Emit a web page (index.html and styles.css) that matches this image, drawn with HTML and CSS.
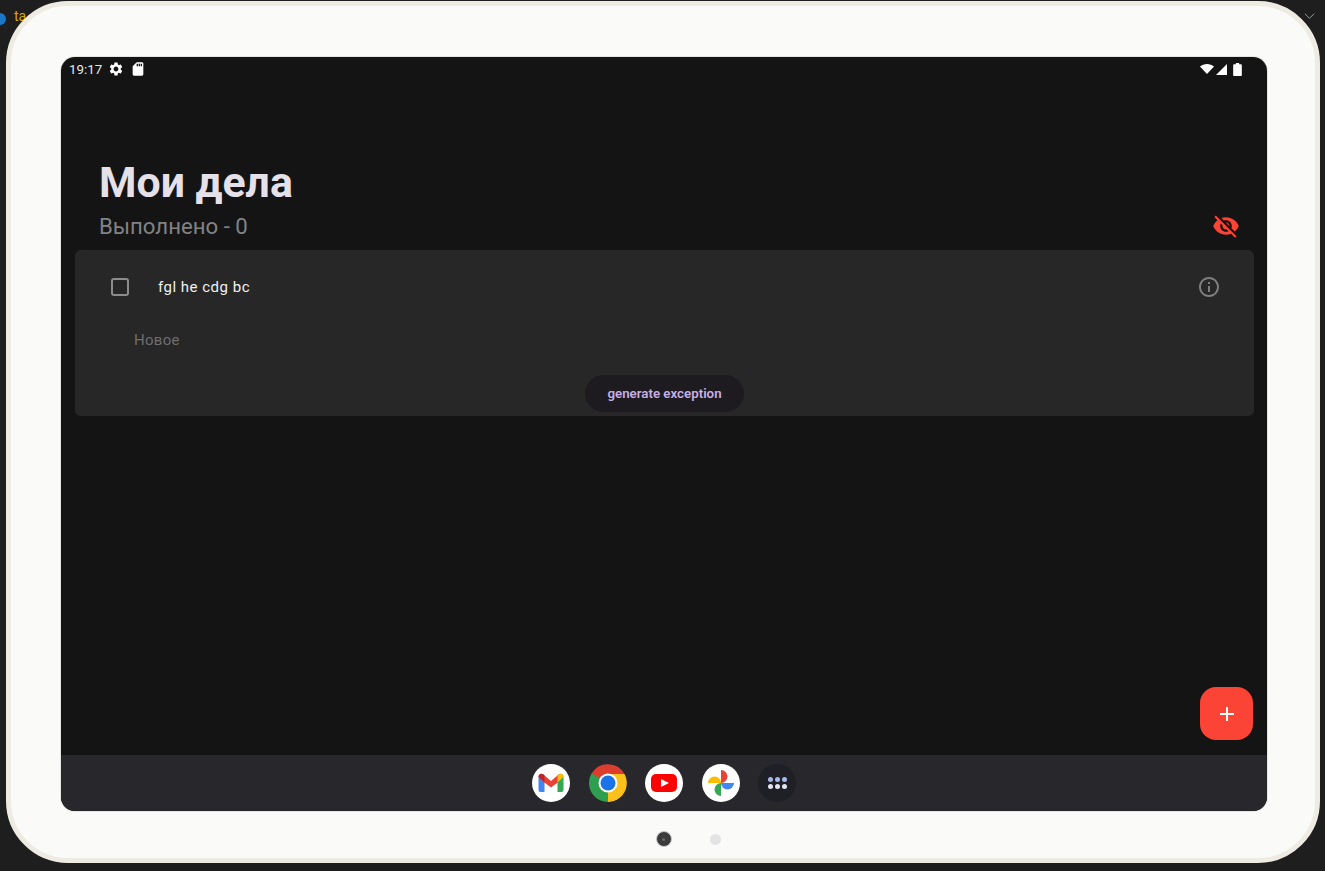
FILE: index.html
```html
<!DOCTYPE html>
<html lang="ru">
<head>
    <meta charset="utf-8">
    <title>Мои дела</title>
    <link rel="stylesheet" href="styles.css">
</head>
<body>
    <!-- bits of the IDE window behind the emulator frame -->
    <div class="host-dot"></div>
    <div class="host-text">ta</div>
    <svg class="host-chevron" viewBox="0 0 12 8"><path d="M1 1.5l5 5 5-5" fill="none" stroke="#9aa7b8" stroke-width="1"/></svg>

    <div class="device">
        <div class="screen">
            <div class="status-bar">
                <div class="status-left">
                    <span class="clock">19:17</span>
                    <svg class="status-icon gear" viewBox="0 0 24 24"><path d="M19.14 12.94c.04-.3.06-.61.06-.94 0-.32-.02-.64-.07-.94l2.03-1.58c.18-.14.23-.41.12-.61l-1.92-3.32c-.12-.22-.37-.29-.59-.22l-2.39.96c-.5-.38-1.03-.7-1.62-.94l-.36-2.54c-.04-.24-.24-.41-.48-.41h-3.84c-.24 0-.43.17-.47.41l-.36 2.54c-.59.24-1.13.57-1.62.94l-2.39-.96c-.22-.08-.47 0-.59.22L2.74 8.87c-.12.21-.08.47.12.61l2.03 1.58c-.05.3-.09.63-.09.94s.02.64.07.94l-2.03 1.58c-.18.14-.23.41-.12.61l1.92 3.32c.12.22.37.29.59.22l2.39-.96c.5.38 1.03.7 1.62.94l.36 2.54c.05.24.24.41.48.41h3.84c.24 0 .44-.17.47-.41l.36-2.54c.59-.24 1.13-.56 1.62-.94l2.39.96c.22.08.47 0 .59-.22l1.92-3.32c.12-.22.07-.47-.12-.61l-2.01-1.58zM12 15.6c-1.98 0-3.6-1.62-3.6-3.6s1.62-3.6 3.6-3.6 3.6 1.62 3.6 3.6-1.62 3.6-3.6 3.6z"/></svg>
                    <svg class="status-icon sd" viewBox="0 0 24 24"><path d="M18 2h-8L4 8v12c0 1.1.9 2 2 2h12c1.1 0 2-.9 2-2V4c0-1.1-.9-2-2-2zm-6 6h-2V4h2v4zm3 0h-2V4h2v4zm3 0h-2V4h2v4z"/></svg>
                </div>
                <div class="status-right">
                    <svg class="wifi" viewBox="0 0 14 10"><path d="M0 2.6C1.9 1 4.3 0 7 0s5.100 1 7 2.600L7 10z"/></svg>
                    <svg class="signal" viewBox="0 0 10 10"><path d="M10 0v10H0z"/></svg>
                    <svg class="battery" viewBox="0 0 8 12"><path d="M2.500 0h3v1.200H7c.5 0 1 .4 1 1V11c0 .6-.5 1-1 1H1c-.5 0-1-.4-1-1V2.200c0-.6.5-1 1-1h1.500z"/></svg>
                </div>
            </div>

            <div class="content">
                <header class="page-head">
                    <h1 class="title">Мои дела</h1>
                    <div class="subtitle-row">
                        <span class="subtitle">Выполнено - 0</span>
                        <svg class="eye-off" viewBox="0 0 24 24"><path d="M12 7c2.760 0 5 2.240 5 5 0 .65-.13 1.260-.36 1.830l2.920 2.920c1.510-1.260 2.700-2.890 3.430-4.750-1.730-4.390-6-7.500-11-7.500-1.400 0-2.740.25-3.980.7l2.160 2.160C10.740 7.130 11.350 7 12 7zM2 4.270l2.280 2.280.46.46C3.080 8.300 1.780 10.020 1 12c1.730 4.390 6 7.500 11 7.500 1.550 0 3.030-.3 4.380-.84l.42.42L19.730 22 21 20.730 3.270 3 2 4.270zM7.530 9.800l1.550 1.550c-.05.21-.08.43-.08.65 0 1.660 1.340 3 3 3 .22 0 .44-.03.65-.08l1.550 1.550c-.67.33-1.410.53-2.200.53-2.760 0-5-2.240-5-5 0-.79.2-1.530.53-2.200zm4.310-.78l3.150 3.150.02-.16c0-1.660-1.340-3-3-3l-.17.01z"/></svg>
                    </div>
                </header>

                <section class="card">
                    <div class="task-row">
                        <span class="checkbox"></span>
                        <span class="task-text">fgl he cdg bc</span>
                        <svg class="info" viewBox="0 0 24 24"><path d="M11 7h2v2h-2zm0 4h2v6h-2zm1-9C6.480 2 2 6.480 2 12s4.480 10 10 10 10-4.480 10-10S17.520 2 12 2zm0 18c-4.410 0-8-3.590-8-8s3.590-8 8-8 8 3.590 8 8-3.590 8-8 8z"/></svg>
                    </div>
                    <div class="new-task">Новое</div>
                    <button class="exception-btn">generate exception</button>
                </section>
            </div>

            <button class="fab">
                <svg viewBox="0 0 14 14"><path d="M7 0v14M0 7h14" stroke="#fff" stroke-width="2"/></svg>
            </button>

            <nav class="dock">
                <svg class="app" viewBox="0 0 38 38">
                    <circle cx="19" cy="19" r="19" fill="#fff"/>
                    <path d="M6.500 12.500c0-2.500 2.800-3.600 4.500-2.300l1.500 1.200V28H8.500a2 2 0 0 1-2-2z" fill="#4285f4"/>
                    <path d="M31.500 12.500c0-2.500-2.800-3.600-4.500-2.300l-1.500 1.200V28h4a2 2 0 0 0 2-2z" fill="#34a853"/>
                    <path d="M11 10.200L19 17l8-6.800 0 7.300-8 6-8-6z" fill="#ea4335"/>
                    <path d="M6.500 12.500c0-2.500 2.800-3.600 4.500-2.300l1.500 1.200v7.200l-6-5.500z" fill="#c5221f"/>
                    <path d="M31.500 12.500c0-2.500-2.800-3.600-4.500-2.300l-1.500 1.200v7.200l6-5.500z" fill="#fbbc04"/>
                </svg>
                <svg class="app" viewBox="0 0 38 38">
                    <path d="M19 10H35.500A19 19 0 0 0 2.550 9.500L11.200 23.500L19 19z" fill="#dd3d2f"/>
                    <path d="M2.550 9.500A19 19 0 0 0 19 38L26.800 23.500L19 19z" fill="#2e9e4f"/>
                    <path d="M19 38A19 19 0 0 0 35.500 10H19V19z" fill="#fcc21b"/>
                    <circle cx="19" cy="19" r="9.500" fill="#fff"/>
                    <circle cx="19" cy="19" r="7.500" fill="#1a73e8"/>
                </svg>
                <svg class="app" viewBox="0 0 38 38">
                    <circle cx="19" cy="19" r="19" fill="#fff"/>
                    <rect x="6" y="10" width="26" height="18" rx="5" fill="#f00"/>
                    <path d="M16 15l8 4-8 4z" fill="#fff"/>
                </svg>
                <svg class="app" viewBox="0 0 38 38">
                    <circle cx="19" cy="19" r="19" fill="#fff"/>
                    <path d="M19 19V6a6.500 6.500 0 0 1 0 13z" fill="#ea4335"/>
                    <path d="M19 19H32a6.500 6.500 0 0 1-13 0z" fill="#4285f4"/>
                    <path d="M19 19V32a6.500 6.500 0 0 1 0-13z" fill="#34a853"/>
                    <path d="M19 19H6a6.500 6.500 0 0 1 13 0z" fill="#fbbc04"/>
                </svg>
                <div class="app-grid">
                    <span class="grid-dot blue"></span><span class="grid-dot blue"></span><span class="grid-dot blue"></span>
                    <span class="grid-dot"></span><span class="grid-dot"></span><span class="grid-dot"></span>
                </div>
            </nav>
        </div>

        <div class="bezel-controls">
            <span class="camera"><span class="camera-lens"></span></span>
            <span class="bezel-dot"></span>
        </div>
    </div>
</body>
</html>
```

FILE: styles.css
```css
html, body {
    height: 100%;
}
body {
    margin: 0;
    padding: 1px 0 0 6px;
    box-sizing: border-box;
    height: 871px;
    overflow: hidden;
    background-color: #1e1e1e;
    font-family: Roboto, "Noto Sans", sans-serif;
    position: relative;
}
.host-dot {
    position: absolute;
    left: -6px;
    top: 13px;
    width: 12px;
    height: 12px;
    border-radius: 50%;
    background-color: #1976c8;
}
.host-text {
    position: absolute;
    left: 14px;
    top: 8px;
    font-size: 14px;
    color: #d8a800;
}
.host-chevron {
    position: absolute;
    left: 1304px;
    top: 12px;
    width: 11px;
    height: 8px;
}
.device {
    width: 1314px;
    height: 862px;
    box-sizing: border-box;
    position: relative;
    background-color: #fafaf8;
    border: 5px solid #eeebe2;
    border-radius: 62px;
    padding: 51px 0 0 50px;
}
.screen {
    width: 1206px;
    height: 754px;
    position: relative;
    display: flex;
    flex-direction: column;
    overflow: hidden;
    background-color: #141414;
    border-radius: 14px;
    box-shadow: 0 0 0 1px #e4e4e2;
}
.status-bar {
    height: 24px;
    flex: none;
    display: flex;
    align-items: center;
    justify-content: space-between;
    padding: 0 25px 0 8px;
}
.status-left,
.status-right {
    display: flex;
    align-items: center;
}
.clock {
    font-size: 13.300px;
    color: #e8e8e8;
    margin-right: 6px;
}
.status-icon {
    width: 16px;
    height: 16px;
    fill: #fff;
}
.gear {
    margin-right: 6px;
}
.wifi {
    width: 14px;
    height: 10px;
    fill: #fff;
    margin-right: 2px;
}
.signal {
    width: 11px;
    height: 11px;
    fill: #fff;
    margin-right: 6px;
}
.battery {
    width: 9px;
    height: 13px;
    fill: #fff;
}
.content {
    flex: 1;
    display: flex;
    flex-direction: column;
    padding: 0 13px 0 14px;
}
.page-head {
    padding: 75px 14px 0 24px;
}
.title {
    margin: 0;
    font-size: 42.800px;
    line-height: 52px;
    font-weight: 700;
    color: #e6e0e9;
}
.subtitle-row {
    display: flex;
    align-items: center;
    justify-content: space-between;
    height: 32px;
    margin-top: 2px;
}
.subtitle {
    font-size: 22.200px;
    color: #828286;
}
.eye-off {
    width: 28px;
    height: 28px;
    fill: #fb4336;
}
.card {
    margin-top: 8px;
    height: 166px;
    display: flex;
    flex-direction: column;
    background-color: #272727;
    border-radius: 6px;
}
.task-row {
    display: flex;
    align-items: center;
    height: 28px;
    margin-top: 23px;
    padding: 0 33px 0 36px;
}
.checkbox {
    width: 14px;
    height: 14px;
    border: 2px solid #8c8c8c;
    border-radius: 3px;
    margin-right: 29px;
}
.task-text {
    flex: 1;
    font-size: 15px;
    letter-spacing: 0.5px;
    color: #f0f0f0;
}
.info {
    width: 24px;
    height: 24px;
    fill: #7e7e7e;
}
.new-task {
    margin: 29px 0 0 59px;
    font-size: 15px;
    line-height: 20px;
    letter-spacing: 0.3px;
    color: #6e6e6e;
}
.exception-btn {
    align-self: center;
    width: 159px;
    height: 37px;
    margin-top: 25px;
    border: none;
    border-radius: 19px;
    background-color: #1d1b20;
    color: #c4b1e6;
    font-family: inherit;
    font-size: 13.300px;
    font-weight: 600;
}
.fab {
    position: absolute;
    right: 14px;
    bottom: 71px;
    width: 53px;
    height: 53px;
    display: flex;
    align-items: center;
    justify-content: center;
    padding: 0;
    border: none;
    border-radius: 16px;
    background-color: #fb4336;
}
.fab svg {
    width: 14px;
    height: 14px;
}
.dock {
    height: 56px;
    flex: none;
    display: flex;
    align-items: center;
    justify-content: center;
    gap: 18.500px;
    background-color: #27272c;
}
.app {
    width: 38px;
    height: 38px;
}
.app-grid {
    width: 38px;
    height: 38px;
    box-sizing: border-box;
    display: grid;
    grid-template-columns: repeat(3, 5px);
    gap: 2px;
    justify-content: center;
    align-content: center;
    border-radius: 50%;
    background-color: #1f1f26;
}
.grid-dot {
    width: 5px;
    height: 5px;
    border-radius: 50%;
    background-color: #e3e3f2;
}
.grid-dot.blue {
    background-color: #a8b8e8;
}
.bezel-controls {
    display: flex;
    align-items: center;
    justify-content: center;
    gap: 38px;
    height: 56px;
    width: 1206px;
    padding-left: 48px;
    box-sizing: border-box;
}
.camera {
    width: 16px;
    height: 16px;
    box-sizing: border-box;
    display: flex;
    align-items: center;
    justify-content: center;
    border-radius: 50%;
    background-color: #3b3b3b;
    border: 1px solid #c8c8c8;
}
.camera-lens {
    width: 3px;
    height: 3px;
    border-radius: 50%;
    background-color: #6e6468;
}
.bezel-dot {
    width: 11px;
    height: 11px;
    border-radius: 50%;
    background-color: #e3e3e3;
}
```
